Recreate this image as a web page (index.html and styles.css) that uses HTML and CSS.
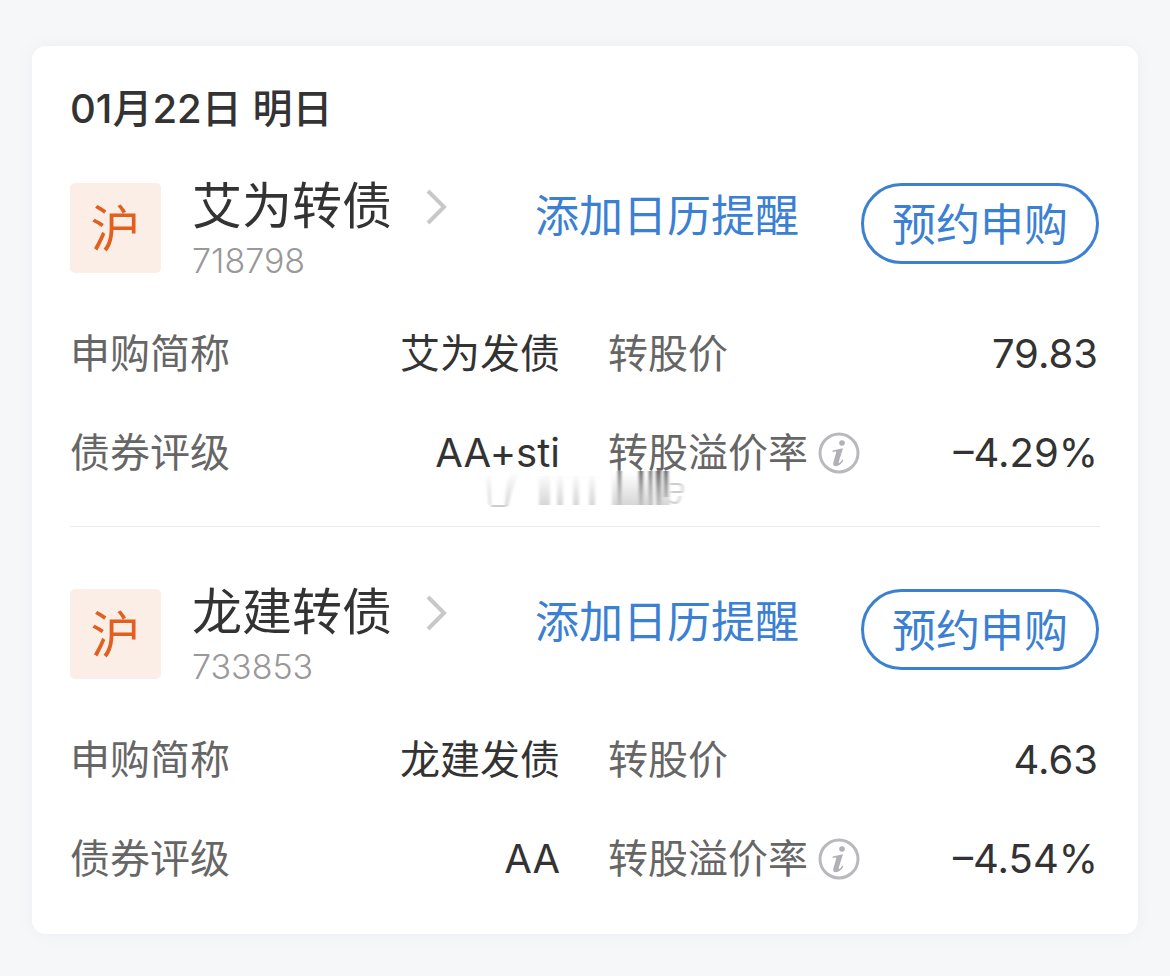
FILE: index.html
```html
<!DOCTYPE html>
<html lang="zh-CN">
<head>
<meta charset="utf-8">
<meta name="viewport" content="width=device-width, initial-scale=1">
<title>新债申购</title>
<link rel="stylesheet" href="styles.css">
</head>
<body>
<main class="card">
  <h1 class="date">01月22日 明日</h1>

  <section class="bond">
    <header class="head">
      <span class="tag">沪</span>
      <div class="title">
        <h2 class="name">艾为转债</h2>
        <span class="code">718798</span>
      </div>
      <svg class="chevron" viewBox="0 0 24 38" aria-hidden="true"><path d="M3 3 L19 19 L3 35"/></svg>
      <a class="remind" href="#">添加日历提醒</a>
      <button class="reserve" type="button">预约申购</button>
    </header>
    <dl class="facts">
      <div class="fact"><dt>申购简称</dt><dd>艾为发债</dd></div>
      <div class="fact"><dt>转股价</dt><dd>79.83</dd></div>
      <div class="fact"><dt>债券评级</dt><dd>AA+sti</dd></div>
      <div class="fact">
        <dt>转股溢价率
          <svg class="info" viewBox="0 0 42 42" aria-hidden="true"><circle class="ring" cx="21" cy="21" r="19"/><circle class="mark" cx="24" cy="11" r="2.8"/><path class="mark" d="M14.6 18.4 L25 16.2 L20.8 29.6 Q20.4 31.6 21.6 30.8 Q23 29.8 24.4 27.6 L25.4 28.4 Q22 34 17.8 34.2 Q14.4 34 15.4 30.2 L18.2 20.8 Q18.6 19.4 17.2 19.6 L14.6 19.9 Z"/></svg>
        </dt>
        <dd>–4.29%</dd>
      </div>
    </dl>
    <svg class="smudge" viewBox="0 0 210 42" aria-hidden="true">
      <defs>
        <linearGradient id="fade" x1="0" y1="0" x2="0" y2="1"><stop offset="0" stop-color="#aaa" stop-opacity="0"/><stop offset="1" stop-color="#aaa" stop-opacity=".5"/></linearGradient>
        <linearGradient id="drip" x1="0" y1="0" x2="0" y2="1"><stop offset="0" stop-color="#555" stop-opacity=".95"/><stop offset="1" stop-color="#888" stop-opacity=".3"/></linearGradient>
        <filter id="soft" x="-10%" y="-10%" width="120%" height="120%"><feGaussianBlur stdDeviation="1.6 0.4"/></filter>
      </defs>
      <g filter="url(#soft)">
        <path fill="url(#fade)" d="M6 6h5v29H9zM27 10L32 2h7L31 24 28 36h-3zM59 6h11v29H59zM77 6h6v29h-6zM93 6h6v29h-6zM109 6h6v29h-6zM132 2h42v33h-42zM176 6h14v29h-14z"/>
        <path fill="url(#drip)" d="M138 1h3v34h-3zM159 1h4v34h-4zM169 1h3v34h-3zM176 1h5v34h-5zM184 1h4v26h-4z"/>
        <path fill="none" stroke="#ccc" stroke-width="2" d="M190 14h9q5 1 3 8h-11M190 31q8 6 10-5M11 36h15"/>
      </g>
    </svg>
  </section>

  <section class="bond">
    <header class="head">
      <span class="tag">沪</span>
      <div class="title">
        <h2 class="name">龙建转债</h2>
        <span class="code">733853</span>
      </div>
      <svg class="chevron" viewBox="0 0 24 38" aria-hidden="true"><path d="M3 3 L19 19 L3 35"/></svg>
      <a class="remind" href="#">添加日历提醒</a>
      <button class="reserve" type="button">预约申购</button>
    </header>
    <dl class="facts">
      <div class="fact"><dt>申购简称</dt><dd>龙建发债</dd></div>
      <div class="fact"><dt>转股价</dt><dd>4.63</dd></div>
      <div class="fact"><dt>债券评级</dt><dd>AA</dd></div>
      <div class="fact">
        <dt>转股溢价率
          <svg class="info" viewBox="0 0 42 42" aria-hidden="true"><circle class="ring" cx="21" cy="21" r="19"/><circle class="mark" cx="24" cy="11" r="2.8"/><path class="mark" d="M14.6 18.4 L25 16.2 L20.8 29.6 Q20.4 31.6 21.6 30.8 Q23 29.8 24.4 27.6 L25.4 28.4 Q22 34 17.8 34.2 Q14.4 34 15.4 30.2 L18.2 20.8 Q18.6 19.4 17.2 19.6 L14.6 19.9 Z"/></svg>
        </dt>
        <dd>–4.54%</dd>
      </div>
    </dl>
  </section>
</main>
</body>
</html>
```
FILE: styles.css
```css
* {
  box-sizing: border-box;
}

body {
  margin: 0;
  padding: 46px 32px 42px;
  background: #f6f7f9;
  color: #333;
  font-family: Inter, "Noto Sans CJK SC", sans-serif;
  font-weight: 400;
}

.card {
  padding: 36px 38px 0;
  border-radius: 14px;
  background: #fff;
  box-shadow: 0 0 20px rgba(40, 50, 70, 0.04);
}

.date {
  margin: 0;
  font-size: 40px;
  font-weight: 500;
  line-height: 54px;
}

.bond {
  position: relative;
  padding: 47px 0 24px;
}

.bond + .bond {
  padding-top: 62px;
  padding-bottom: 26px;
  border-top: 1px solid #ebebeb;
}

.head {
  display: flex;
  align-items: flex-start;
  padding-right: 1px;
}

.tag {
  width: 91px;
  height: 90px;
  border-radius: 5px;
  background: #fbeee6;
  color: #e2601f;
  font-size: 50px;
  line-height: 92px;
  text-align: center;
}

.title {
  display: flex;
  flex-direction: column;
  margin-left: 31px;
}

.name {
  margin: 0;
  font-size: 50px;
  font-weight: 400;
  line-height: 46px;
}

.code {
  height: 44px;
  color: #999;
  font-size: 34px;
  font-weight: 300;
  line-height: 64px;
}

.chevron {
  width: 24px;
  height: 38px;
  margin: 5px 0 0 33px;
  fill: none;
  stroke: #c8c8c8;
  stroke-width: 4;
}

.remind {
  margin-left: auto;
  color: #3b80d2;
  font-size: 44px;
  line-height: 66px;
  text-decoration: none;
}

.reserve {
  height: 81px;
  margin-left: 62px;
  padding: 3px 28px 0;
  border: 3px solid #3b80d2;
  border-radius: 41px;
  background: #fff;
  color: #3b80d2;
  font: inherit;
  font-size: 44px;
  line-height: 72px;
}

.facts {
  display: grid;
  grid-template-columns: 1fr 1fr;
  column-gap: 48px;
  margin: 31px 0 0;
  padding-right: 2px;
}

.fact {
  display: flex;
  align-items: center;
  justify-content: space-between;
  height: 99px;
  font-size: 40px;
  line-height: 60px;
}

dt {
  display: flex;
  align-items: center;
  gap: 10px;
  color: #666;
}

dd {
  margin: 0;
}

.info {
  width: 42px;
  height: 42px;
}

.ring {
  fill: none;
  stroke: #b9b9bd;
  stroke-width: 3;
}

.mark {
  fill: #b0b0b6;
}

.smudge {
  position: absolute;
  left: 410px;
  bottom: 14px;
  width: 210px;
  height: 42px;
}
```
